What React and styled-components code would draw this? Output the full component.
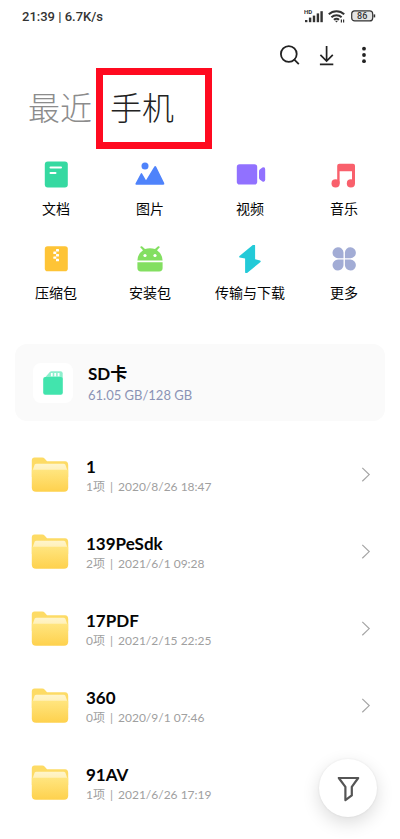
import React from 'react';
import styled, { createGlobalStyle } from 'styled-components';

const COLORS = {
  black: '#050505',
  gray900: '#222222',
  gray800: '#333333',
  gray600: '#555555',
  gray500: '#8c8c8c',
  gray400: '#a0a0a0',
  card: '#fafafa',
  slate: '#8b93b5',
  red: '#ff0a20',
};

const GlobalStyle = createGlobalStyle`
  * {
    box-sizing: border-box;
  }

  body {
    margin: 0;
    background: #fff;
    color: ${COLORS.black};
    font-family: Lato, 'Noto Sans CJK SC', sans-serif;
  }

  button {
    margin: 0;
    padding: 0;
    border: 0;
    background: none;
    color: inherit;
    font: inherit;
    cursor: pointer;
  }

  svg {
    display: block;
    flex: none;
  }
`;

const StatusBar = styled.div`
  display: flex;
  align-items: center;
  justify-content: space-between;
  height: 32px;
  padding: 0 24px 0 22px;
  font-family: Roboto, sans-serif;
  font-size: 13px;
  font-weight: 500;
  color: ${COLORS.gray800};
`;

const StatusIcons = styled.div`
  display: flex;
  align-items: center;
  gap: 5px;
`;

const Toolbar = styled.div`
  display: flex;
  align-items: center;
  justify-content: flex-end;
  gap: 13px;
  height: 46px;
  padding-right: 24px;
`;

const ToolButton = styled.button`
  display: grid;
  place-items: center;
  width: 24px;
  height: 24px;
`;

const Tabs = styled.nav`
  display: flex;
  gap: 18px;
  padding: 10px 28px 0;
`;

const Tab = styled.button`
  position: relative;
  font-size: 32px;
  font-weight: 300;
  line-height: 40px;
  color: ${(p) => (p.$active ? COLORS.gray900 : COLORS.gray500)};
`;

/* Red frame drawn round the tab that should be tapped */
const Highlight = styled.span`
  position: absolute;
  top: -20px;
  left: -14px;
  width: 116px;
  height: 81px;
  border: 7px solid ${COLORS.red};
  pointer-events: none;
`;

const Categories = styled.div`
  display: grid;
  grid-template-columns: 22fr 25fr 25fr 22fr;
  row-gap: 26px;
  margin-top: 33px;
  padding: 0 12px;
`;

const Category = styled.button`
  display: flex;
  flex-direction: column;
  align-items: center;
  gap: 10px;
  font-size: 14px;
  line-height: 20px;
  white-space: nowrap;
`;

const StorageCard = styled.button`
  display: flex;
  align-items: center;
  gap: 15px;
  width: calc(100% - 30px);
  height: 77px;
  margin: 41px 15px 0;
  padding: 0 18px;
  border-radius: 12px;
  background: ${COLORS.card};
  text-align: left;
`;

const StorageTile = styled.span`
  display: grid;
  place-items: center;
  width: 40px;
  height: 40px;
  border-radius: 8px;
  background: #fff;
`;

const Lines = styled.span`
  display: flex;
  flex: 1;
  flex-direction: column;
  padding-top: 2px;
`;

const Title = styled.span`
  font-size: 17px;
  font-weight: 700;
  line-height: 22px;
`;

const Usage = styled.span`
  font-size: 13px;
  line-height: 20px;
  color: ${COLORS.slate};
`;

const Meta = styled.span`
  display: flex;
  gap: 5px;
  font-size: 12px;
  line-height: 18px;
  color: ${COLORS.gray400};
`;

const FolderList = styled.ul`
  margin: 15px 0 0;
  padding: 0;
  list-style: none;
`;

const FolderRow = styled.button`
  display: flex;
  align-items: center;
  gap: 17px;
  width: 100%;
  height: 77px;
  padding: 0 29px 0 31px;
  text-align: left;
`;

const FilterButton = styled.button`
  position: fixed;
  right: 23px;
  bottom: 22px;
  display: grid;
  place-items: center;
  width: 58px;
  height: 58px;
  border-radius: 50%;
  background: #fff;
  box-shadow: 0 6px 18px rgba(0, 0, 0, 0.14), 0 0 3px rgba(0, 0, 0, 0.08);
`;

const SignalIcon = () => (
  <svg width="19" height="14" viewBox="0 0 19 14" fill={COLORS.gray800}>
    <text x="0" y="5" fontSize="6" fontWeight="700" fontFamily="Roboto, sans-serif">HD</text>
    <rect x="1" y="11" width="2.4" height="2.2" />
    <rect x="4.9" y="8.6" width="2.4" height="4.6" />
    <rect x="8.8" y="6.6" width="2.4" height="6.6" />
    <rect x="12.7" y="4.4" width="2.4" height="8.8" />
    <rect x="16.4" y="2.2" width="2.4" height="11" />
  </svg>
);

const WifiIcon = () => (
  <svg width="18" height="14" viewBox="0 0 18 14" fill="none" stroke={COLORS.gray800} strokeWidth="2">
    <path d="M0.8 5.2a11.2 11.2 0 0 1 15.4 0M3.4 8.2a7.6 7.6 0 0 1 10.2 0M5.9 10.8a4.2 4.2 0 0 1 5.2 0" />
    <path d="M7 11.8h3L8.5 13.6z" fill={COLORS.gray800} stroke="none" />
    <path d="M13.4 10.4v3M15.6 10.4v3" strokeWidth="1.2" />
  </svg>
);

const BatteryIcon = () => (
  <svg width="25" height="12" viewBox="0 0 25 12">
    <rect x="0.7" y="0.9" width="21" height="10" rx="3" fill="#e4e4e4" stroke={COLORS.gray800} strokeWidth="1.2" />
    <path d="M23.4 4.4v3" stroke={COLORS.gray800} strokeWidth="1.6" />
    <text x="11.2" y="9.1" fontSize="9" fontWeight="500" textAnchor="middle" fontFamily="Roboto, sans-serif" fill={COLORS.gray800}>86</text>
  </svg>
);

const SearchIcon = () => (
  <svg width="22" height="22" viewBox="0 0 22 22" fill="none" stroke="#222" strokeWidth="1.8">
    <circle cx="9.8" cy="10" r="7.9" />
    <path d="M14.8 15.2l5 5" />
  </svg>
);

const DownloadIcon = () => (
  <svg width="22" height="22" viewBox="0 0 22 22" fill="none" stroke="#222" strokeWidth="1.7">
    <path d="M10.6 2v15M4.4 10.8L10.6 17l6.2-6.2M3.9 20.4h13.4" />
  </svg>
);

const MoreIcon = () => (
  <svg width="22" height="22" viewBox="0 0 22 22" fill="#222">
    <circle cx="11" cy="4.7" r="1.9" />
    <circle cx="11" cy="11" r="1.9" />
    <circle cx="11" cy="17.2" r="1.9" />
  </svg>
);

const CategoryIcon = ({ children }) => (
  <svg width="32" height="28" viewBox="0 0 32 28">{children}</svg>
);

const CATEGORIES = [
  {
    label: '文档',
    icon: (
      <>
        <rect x="4.8" y="0.5" width="23" height="26" rx="3" fill="#35d9a1" />
        <path d="M10.5 6.5h10.5M10.5 12h5" stroke="#fff" strokeWidth="2" strokeLinecap="round" />
      </>
    ),
  },
  {
    label: '图片',
    icon: (
      <g fill="#4f83fb">
        <circle cx="11" cy="5" r="3.5" />
        <path d="M2.6 23.8C1.5 23.8 1.2 23 1.6 22.2L6.7 12.7Q7.4 11.5 8.2 12.7L12 19.3 20.2 5.8Q21.2 4.3 22.2 5.8L30.2 22Q30.9 23.8 29.2 23.8z" />
      </g>
    ),
  },
  {
    label: '视频',
    icon: (
      <g fill="#9171ff">
        <rect x="2.8" y="3.2" width="20.4" height="20.3" rx="2.8" />
        <path d="M25 10.3Q25 9.3 25.8 8.6L28.4 6.6Q31.2 5.6 31.2 8.4V18.6Q31.2 21.4 28.4 20.4L25.8 18.4Q25 17.7 25 16.7z" />
      </g>
    ),
  },
  {
    label: '音乐',
    icon: (
      <g fill="#f9606c">
        <path d="M9.2 4.8Q9.2 2.7 11.4 2.7H25Q27 2.7 27 4.8V22.4H24V10.2H11.6V22.4H9.2z" />
        <circle cx="7.6" cy="22.4" r="4.1" />
        <circle cx="22.9" cy="22.4" r="4.1" />
      </g>
    ),
  },
  {
    label: '压缩包',
    icon: (
      <>
        <rect x="4.8" y="1.2" width="23" height="25" rx="2.8" fill="#fec436" />
        <g fill="#fff">
          <rect x="16" y="4" width="3" height="2.4" rx="0.5" />
          <rect x="13.3" y="6.6" width="3" height="2.4" rx="0.5" />
          <rect x="16" y="9" width="3" height="2.4" rx="0.5" />
          <rect x="13.3" y="11.4" width="3" height="2.4" rx="0.5" />
          <rect x="16" y="13.8" width="3" height="2.4" rx="0.5" />
        </g>
      </>
    ),
  },
  {
    label: '安装包',
    icon: (
      <>
        <g fill="#83df61">
          <path d="M3.4 15.6Q3.6 8.8 9 5.2L6.2 2.2Q6.6 0.9 7.9 1.2L11 4.1Q16 2.3 21 4.1L24.1 1.2Q25.4 0.9 25.8 2.2L23 5.2Q28.3 8.8 28.6 15.6z" />
          <path d="M3.4 17.2H28.6V23Q28.6 26.4 25.2 26.4H6.8Q3.4 26.4 3.4 23z" />
        </g>
        <circle cx="11" cy="10.5" r="1.6" fill="#fff" />
        <circle cx="21" cy="10.5" r="1.6" fill="#fff" />
      </>
    ),
  },
  {
    label: '传输与下载',
    icon: (
      <path d="M18.8 0.1Q20.8 -1.4 21.1 0.8V14.3L26.1 15.4Q27.4 16.1 26.2 17.2L13.1 27.9Q11.2 29 11.1 27V13.5L5.6 12.5Q4.6 11.7 5.8 10.8z" fill="#23cad8" />
    ),
  },
  {
    label: '更多',
    icon: (
      <g fill="#a2acd5">
        <path d="M15.5 13.2H10A5.5 5.5 0 1 1 15.5 7.5z" />
        <path d="M16.9 13.2H22.4A5.5 5.5 0 1 0 16.9 7.5z" />
        <path d="M15.5 14.6H10A5.5 5.5 0 1 0 15.5 20.3z" />
        <path d="M16.9 14.6H22.4A5.5 5.5 0 1 1 16.9 20.3z" />
      </g>
    ),
  },
];

const SdCardIcon = () => (
  <svg width="20" height="24" viewBox="0 0 20 24">
    <path d="M0.3 8.5L7 0.7Q7.6 0.2 8.5 0.2H17.5Q19.7 0.2 19.7 2.4V8.5z" fill="#8eefcd" />
    <rect x="0.2" y="6" width="19.6" height="17.8" rx="2" fill="#42e4ad" />
    <path d="M8.8 2v3.2M12.2 2v3.2M15.6 2v3.2" stroke="#fff" strokeWidth="1.8" />
  </svg>
);

const FolderIcon = () => (
  <svg width="38" height="36" viewBox="0 0 38 36">
    <defs>
      <linearGradient id="folder-front" x1="0" y1="0" x2="0" y2="1">
        <stop offset="0" stopColor="#ffe57f" />
        <stop offset="1" stopColor="#fed14d" />
      </linearGradient>
      <linearGradient id="folder-paper" x1="0" y1="0" x2="0" y2="1">
        <stop offset="0" stopColor="#fff5cb" />
        <stop offset="1" stopColor="#fff0b8" />
      </linearGradient>
    </defs>
    <path d="M0.8 3.6Q0.8 0.6 3.6 0.6H11.2Q12.8 0.6 13.8 1.8L16 4.2H34Q37.2 4.2 37.2 8V20H0.8z" fill="#fddb65" />
    <path d="M5.4 6.7H32.6Q33.8 6.7 34.4 7.8L36.4 13.4H1.6L3.6 7.8Q4.2 6.7 5.4 6.7z" fill="url(#folder-paper)" />
    <path d="M0.8 12.8H37.2V30.6Q37.2 34.8 33 34.8H5Q0.8 34.8 0.8 30.6z" fill="url(#folder-front)" />
  </svg>
);

const ChevronIcon = () => (
  <svg width="10" height="16" viewBox="0 0 10 16" fill="none" stroke="#a6a6a6" strokeWidth="1.2">
    <path d="M1.3 0.9L8.2 7.6l-6.9 6.7" />
  </svg>
);

const FilterIcon = () => (
  <svg width="24" height="28" viewBox="0 0 24 28" fill="none" stroke={COLORS.gray600} strokeWidth="2.2" strokeLinejoin="round">
    <path d="M2.8 4H22.2L15.8 12.8V21.4L9.4 26.2V12.8z" />
  </svg>
);

const FOLDERS = [
  { name: '1', count: 1, date: '2020/8/26 18:47' },
  { name: '139PeSdk', count: 2, date: '2021/6/1 09:28' },
  { name: '17PDF', count: 0, date: '2021/2/15 22:25' },
  { name: '360', count: 0, date: '2020/9/1 07:46' },
  { name: '91AV', count: 1, date: '2021/6/26 17:19' },
];

const App = () => (
  <>
    <GlobalStyle />
    <StatusBar>
      <span>21:39 | 6.7K/s</span>
      <StatusIcons>
        <SignalIcon />
        <WifiIcon />
        <BatteryIcon />
      </StatusIcons>
    </StatusBar>
    <Toolbar>
      <ToolButton aria-label="搜索"><SearchIcon /></ToolButton>
      <ToolButton aria-label="下载"><DownloadIcon /></ToolButton>
      <ToolButton aria-label="菜单"><MoreIcon /></ToolButton>
    </Toolbar>
    <Tabs>
      <Tab>最近</Tab>
      <Tab $active>
        手机
        <Highlight />
      </Tab>
    </Tabs>
    <Categories>
      {CATEGORIES.map(({ label, icon }) => (
        <Category key={label}>
          <CategoryIcon>{icon}</CategoryIcon>
          {label}
        </Category>
      ))}
    </Categories>
    <StorageCard>
      <StorageTile><SdCardIcon /></StorageTile>
      <Lines>
        <Title>SD卡</Title>
        <Usage>61.05 GB/128 GB</Usage>
      </Lines>
    </StorageCard>
    <FolderList>
      {FOLDERS.map(({ name, count, date }) => (
        <li key={name}>
          <FolderRow>
            <FolderIcon />
            <Lines>
              <Title>{name}</Title>
              <Meta>
                <span>{count}项</span>
                <span>|</span>
                <span>{date}</span>
              </Meta>
            </Lines>
            <ChevronIcon />
          </FolderRow>
        </li>
      ))}
    </FolderList>
    <FilterButton aria-label="筛选"><FilterIcon /></FilterButton>
  </>
);

export default App;
